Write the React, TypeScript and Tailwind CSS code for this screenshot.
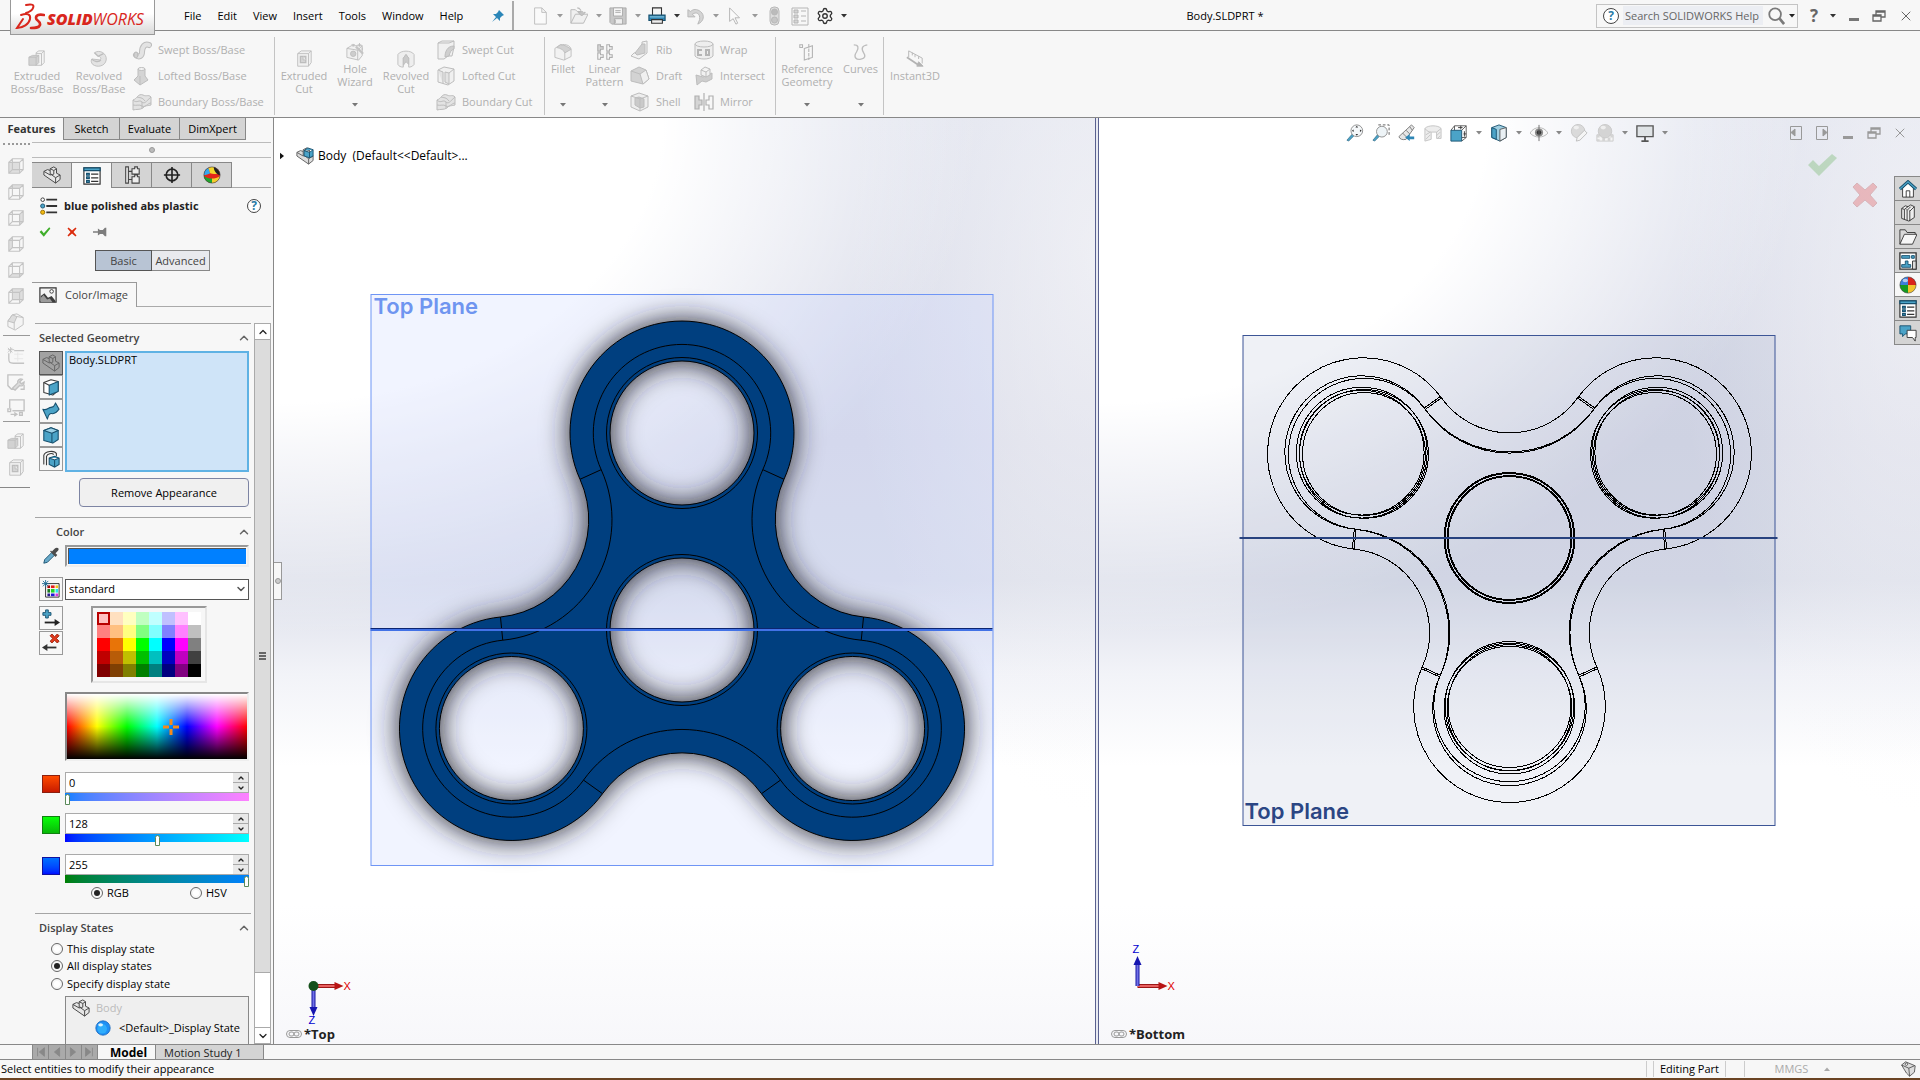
import { useState } from 'react';
import type { ReactNode } from 'react';
import { ChevronDown, ChevronUp, Settings, X } from 'lucide-react';

const G = '#bdbdbd'; // disabled stroke
const F = '#e3e3e3'; // disabled fill
const D = '#3c3c3c';
const B = '#4ba3c7';
const N = '#17506e';

// the part symbol is reused in several places
const part = (stroke: string, fill: string) => (
    <g stroke={stroke} fill={fill} strokeWidth="1.1" strokeLinejoin="round">
        <path d="M1 6l4-2 3 1V3l4-2 3 2v5l4 2v5l-5 4L1 10z" />
        <path d="M1 6l7 4 2-1M8 5v4l2 1M8 3l4 2 3-2M12 5v4l-2 1 4 3 5-3M14 13v6" fill="none" />
    </g>
);

const cube = (stroke: string, face: string | null) => (
    <g stroke={stroke} fill="none" strokeWidth="1.2">
        {face && <path d={face} fill="#dedede" stroke="none" />}
        <path d="M2 6h12v12H2zM6 2h12v12H6zM2 6l4-4M14 6l4-4M14 18l4-4M2 18l4-4" />
    </g>
);

const icons: Record<string, ReactNode> = {
    extrudedBoss: (
        <g stroke={G} fill={F}>
            <path d="M9 3l3-2h6v13l-3 3H9z" fill="#f4f4f4" />
            <path d="M18 1l-3 3v13M15 4H9" fill="none" />
            <path d="M1 8l4-2h7v8l-3 3H1zM1 8h8v9M9 8l3-2" fill="#d2d2d2" />
        </g>
    ),
    revolvedBoss: (
        <g fill="none" stroke={G}>
            <path d="M5 3c6-4 14 1 13 8-1 7-10 9-15 5-2-2-2-5-1-6l9 1c2-1 1-4-2-4z" fill={F} />
            <path d="M5 3l4 4 6-3M2 10c2 3 8 4 10 1" strokeWidth="1.500" />
        </g>
    ),
    sweptBoss: (
        <g fill="none" strokeLinecap="round">
            <path d="M4 15c3 3 6 1 6-3 0-5 3-9 7-7" stroke={G} strokeWidth="6" />
            <path d="M4 15c3 3 6 1 6-3 0-5 3-9 7-7" stroke={F} strokeWidth="4" />
            <ellipse cx="4" cy="15" rx="2" ry="3" fill="#cfcfcf" stroke={G} />
        </g>
    ),
    loftedBoss: (
        <g stroke={G} fill="#d4d4d4">
            <path d="M6 3v7L2 14l6 5 8-5-3-4V3z" />
            <ellipse cx="9.500" cy="3" rx="3.500" ry="1.500" fill="#f3f3f3" />
            <path d="M8 10v9" />
        </g>
    ),
    boundaryBoss: (
        <g stroke={G} fill={F}>
            <path d="M1 8c4-1 5-7 10-5 4 2 5-1 8 2v8c-3 1-6 0-8 3-3 2-7 1-10 2z" />
            <path d="M1 8c4 4 6-1 9 2s6-3 9-5M10 10v6M5 5c3 1 5 0 8 4M1 13c4 1 6-1 9 1s6-3 9-3" fill="none" />
        </g>
    ),
    extrudedCut: (
        <g stroke={G} fill="#f1f1f1">
            <path d="M3 4l4-3h11v13l-3 4H3z" />
            <path d="M3 4h12v14M15 4l3-3" fill="none" />
            <path d="M6 7h6v7H6z" fill="#d5d5d5" strokeWidth="1.500" />
            <path d="M9 7v4h3" />
        </g>
    ),
    holeWizard: (
        <g stroke={G} fill="#f1f1f1">
            <path d="M1 6l5-3h12v11l-4 5-13-3z" />
            <path d="M1 6l12 2v11M13 8l5-5" fill="none" />
            <circle cx="8" cy="12" r="3" fill="#cdcdcd" />
            <path d="M11 4l8 8" strokeWidth="2.500" stroke="#c4c4c4" />
            <path d="M8 1v3M6 2h4M15 0v4M13 2h4M18 5v3" />
        </g>
    ),
    revolvedCut: (
        <g stroke={G} fill="#eee">
            <path d="M1 5c3-5 15-5 18 0v11c-2 3-5 3-6 3V9l-3-4-3 4v10c-3 0-5-1-6-3z" />
            <path d="M7 9l3-4 3 4v7l-3-3-3 4z" fill="#cacaca" />
        </g>
    ),
    sweptCut: (
        <g stroke={G} fill="#f0f0f0">
            <path d="M2 3l4-2h12v6l-2 9h-4l-4 3H2z" />
            <path d="M18 6c-7 0-9 6-9 11l4-1c1-4 2-6 5-7z" fill="#cfcfcf" />
            <path d="M2 3h11l5-2" fill="none" />
        </g>
    ),
    loftedCut: (
        <g stroke={G} fill="#f0f0f0">
            <path d="M2 4l6-3 10 2v12l-6 4-10-3z" />
            <path d="M2 4l5 2v12M9 6v10l4 2V7zM13 7l5-4" fill={F} />
        </g>
    ),
    fillet: (
        <g stroke={G} fill="#f2f2f2">
            <path d="M1 6l6-4c7-1 11 1 12 5v8l-8 4-10-3z" />
            <path d="M7 2c6 0 9 3 12 5l-7 4C11 8 8 6 3 5z" fill="#d2d2d2" />
            <path d="M12 11v8" />
        </g>
    ),
    linear: (
        <g stroke="#aeaeae" fill="#f7f7f7" strokeWidth="1.200">
            <path d="M2 2h3v2h3v3H5v2H2z" fill="#d5d5d5" />
            <path d="M12 2h3v2h3v3h-3v2h-3zM2 11h3v2h3v3H5v2H2zM12 11h3v2h3v3h-3v2h-3z" />
        </g>
    ),
    rib: (
        <g stroke={G} fill={F}>
            <path d="M12 2l5-1v12l-8 6-8-3 3-3 8-2z" fill="#f3f3f3" />
            <path d="M12 4L5 13l2 2 8-2V4z" fill="#cfcfcf" />
        </g>
    ),
    draft: (
        <g stroke={G} fill="#d3d3d3">
            <path d="M1 5l8-4 7 3 3 9-6 5-12-3z" />
            <path d="M10 8l6-4 3 9-6 5z" fill="#f0f0f0" />
            <path d="M1 5l9 3" />
        </g>
    ),
    shell: (
        <g stroke={G} fill="#eee">
            <path d="M1 4l8-3 9 3v11l-8 4-9-4z" />
            <path d="M5 6l4-1 5 2v8l-4 1-5-3z" fill="#cacaca" />
            <path d="M1 4l9 3 8-3M10 7v12" fill="none" />
        </g>
    ),
    wrap: (
        <g stroke={G} fill="#eee">
            <path d="M1 4v12c3 4 15 4 18 0V4" />
            <ellipse cx="10" cy="4" rx="9" ry="3" />
            <path d="M8 10H4v5h4M12 10h3v5h-3z" stroke="#b5b5b5" strokeWidth="2" fill="none" />
        </g>
    ),
    intersect: (
        <g stroke={G} fill="#ddd">
            <path d="M2 9l7 2 9-4v6l-6 3-4-1-5 4z" fill="#cecece" />
            <path d="M7 4l4-3 5 2v6l-4 2-5-2zM7 4l5 2 4-3M12 6v5" fill="#f1f1f1" />
        </g>
    ),
    mirror: (
        <g stroke="#b0b0b0" fill="#d5d5d5" strokeWidth="1.200">
            <path d="M1 4h4v4h3v5H5v4H1z" />
            <path d="M10 1v18" />
            <path d="M19 4h-4v4h-3v5h3v4h4z" fill="#f7f7f7" />
        </g>
    ),
    refGeometry: (
        <g stroke="#b3b3b3" fill="none" strokeWidth="1.200">
            <path d="M2 2h3v3H2zM7 6l9-3v13l-9 3z" />
            <path d="M12 1v18" strokeDasharray="4 1" />
        </g>
    ),
    curves: <path d="M2 2c5 0 6 3 3 8-4 6 0 9 5 8s5-4 3-7c-3-5-2-8 4-9" stroke={G} fill="none" strokeWidth="1.500" />,
    instant3d: (
        <g stroke="#b3b3b3" fill="none">
            <path d="M3 8V1l15 8v6M7 3v3M10 5v3M14 7v3" />
            <path d="M1 8l12 8" strokeWidth="2" />
            <path d="M12 18l2-5 5 5z" fill="#b3b3b3" />
        </g>
    ),

    newDoc: <path d="M4 1h8l5 5v13H4zM12 1v5h5" fill="#fafafa" stroke="#bbb" />,
    open: (
        <g stroke="#b5b5b5" fill="#f0f0f0">
            <path d="M1 18V3h5l2 2h6v4" />
            <path d="M1 18L6 8h14l-5 10z" />
            <path d="M8 1c4 0 4 2 4 5H9l4 4 4-4h-2" fill="#c4c4c4" />
        </g>
    ),
    save: (
        <g stroke="#a9a9a9" fill="#c8c8c8">
            <path d="M1 1h18v18H3l-2-2z" />
            <path d="M5 1h10v9H5z" fill="#f6f6f6" />
            <path d="M6 13h9v6H6z" fill="#eee" />
            <path d="M7 4h6M7 6h6M7 14v4" />
        </g>
    ),
    print: (
        <g stroke="#333" strokeWidth="1.200">
            <path d="M5 9V1h10v8" fill="#f4f4f4" />
            <path d="M1 9h18v6H1z" fill="#2d83b0" stroke={N} />
            <path d="M4 14h12v4H4z" fill="#eee" />
            <path d="M2 11h16" stroke="#8cc8e2" />
        </g>
    ),
    undo: <path d="M1 3v8h8L6 8c4-3 9-1 8 6l-2 5c7-3 8-10 3-14C11 2 7 2 4 5z" fill="#d4d4d4" stroke="#b5b5b5" />,
    cursor: <path d="M4 1v15l4-3 3 6 2-1-3-6h5z" fill="#fafafa" stroke="#b0b0b0" />,
    traffic: (
        <g stroke="#b8b8b8" fill="#ddd">
            <rect x="6" y="1" width="9" height="18" rx="4" />
            <circle cx="10.500" cy="6" r="3" fill="#bbb" />
            <circle cx="10.500" cy="14" r="3" fill="#c6c6c6" />
        </g>
    ),
    props: (
        <g stroke="#b5b5b5" fill="#f7f7f7">
            <path d="M2 2h16v17H2z" />
            <path d="M4 4h4v3H4zM4 9h4v3H4zM4 14h4v3H4zM11 5h5M11 10h5M11 15h5" fill="#d5d5d5" />
        </g>
    ),

    viewIso: (
        <g stroke={G} fill="#f4f4f4">
            <path d="M1 9l5-7 5-1 7 4v8l-9 6-8-4z" />
            <path d="M1 9l5-7 5 2-3 7z" fill="#ddd" />
            <path d="M8 11v7M11 4l7 1" />
        </g>
    ),
    sketchStar: (
        <g stroke="#c4c4c4" fill="none">
            <path d="M8 8h10M8 13h10M12 6v10" stroke="#e6e6e6" />
            <path d="M2 7v6c0 4 1 5 5 5h12M8 4h11" strokeWidth="1.500" />
            <path d="M4 0v7M1 3h7M1 1l5 5M6 1L1 6" />
        </g>
    ),
    wrench: (
        <g stroke="#c2c2c2" fill="none" strokeWidth="1.500">
            <path d="M18 2H1v12l4 4h3M19 13v5h-4" />
            <path d="M6 17l6-6c-1-3 2-5 5-4l-3 3 2 2 3-2c0 3-2 5-5 4l-5 5z" fill="#ddd" />
        </g>
    ),
    frame: (
        <g stroke="#c2c2c2" fill="none" strokeWidth="1.500">
            <path d="M3 10V1h16v12H6" />
            <path d="M1 11h3v3H1zM14 15h3v3h-3zM4 17h6M8 15l3 2-3 2" />
        </g>
    ),

    partDark: part('#4a4a4a', '#e6e6e6'),
    partGray: part('#666', '#a2a2a2'),
    partBlue: (
        <g>
            {part('#666', '#dcdcdc')}
            <path d="M9 4l4-3 6 2v7l-4 2-6-2zM9 4l6 2 4-3M15 6v6" fill={B} stroke={N} />
        </g>
    ),
    propertyMgr: (
        <g stroke="#333" fill="#fff" strokeWidth="1.300">
            <path d="M1 1h18v18H1z" />
            <path d="M1 1h18v3H1z" fill={B} stroke={N} />
            <path d="M4 7h3v2H4zM4 11h3v2H4zM4 15h3v2H4z" fill={B} stroke={N} />
            <path d="M9 8h8M9 12h8M9 16h8" />
        </g>
    ),
    configMgr: (
        <g stroke="#444" fill="#eee" strokeWidth="1.200">
            <path d="M3 1h3v18H3zM6 6h4M6 15h4" />
            <path d="M10 3h3V1h3v2h2v6h-8zM10 12h3v-2h3v2h2v7h-8z" />
        </g>
    ),
    target: (
        <g stroke="#222" fill="none" strokeWidth="1.800">
            <circle cx="10" cy="10" r="6.500" />
            <path d="M10 1v18M1 10h18" />
        </g>
    ),
    ball: (
        <g>
            <path d="M10 10V1a9 9 0 0 0-9 9z" fill="#3d7edb" />
            <path d="M10 10h9a9 9 0 0 0-9-9z" fill="#d9221c" />
            <path d="M10 10H1a9 9 0 0 0 9 9z" fill="#159a22" />
            <path d="M10 10v9a9 9 0 0 0 9-9z" fill="#f2c32f" />
            <circle cx="10" cy="10" r="9" fill="none" stroke="#333" strokeOpacity=".6" />
            <ellipse cx="7" cy="5" rx="3" ry="2" fill="#fff" opacity=".6" />
        </g>
    ),
    ballMgr: (
        <g>
            <circle cx="10" cy="10" r="9" fill="#e32619" />
            <path d="M1 10c0-4 2-7 5-8l2 6c-2 1-5 2-7 2z" fill="#37a8ee" />
            <path d="M6 2c2-1 4-1 6-1l5 8c-3 0-6 0-9-1z" fill="#f3d52c" />
            <path d="M12 1c4 1 7 5 7 9-3 0-7-4-7-9z" fill="#222" />
            <path d="M1 11c3 2 6 3 9 3v5c-5 0-9-4-9-8z" fill="#1fa52c" />
            <path d="M10 14c3 0 6-1 9-3-1 5-5 8-9 8z" fill="#f4cd2b" />
            <circle cx="10" cy="10" r="9" fill="none" stroke="#444" strokeOpacity=".7" />
        </g>
    ),
    legend: (
        <g stroke="#333">
            <path d="M7 3h12M7 10h12M7 17h12" strokeWidth="2" />
            <circle cx="3" cy="3" r="2" fill="#fff" />
            <circle cx="3" cy="10" r="2.300" fill={B} stroke={N} />
            <circle cx="3" cy="17" r="2.300" fill="#f2b90f" stroke="#946c00" />
        </g>
    ),
    check: <path d="M1 10l3-3 4 5 9-10 2 2L8 18z" fill="#3fae2a" />,
    cross: <path d="M3 1l7 6 7-6 2 2-6 7 6 7-2 2-7-6-7 6-2-2 6-7-6-7z" fill="#db2b0c" />,
    pushpin: <path d="M0 9h7V5l3 2h4l3-3h2v12h-2l-3-3h-4l-3 2v-4H0z" fill="#7d7d7d" />,
    picture: (
        <g>
            <path d="M1 2h18v16H1z" fill="#f4f4f4" stroke="#333" strokeWidth="1.300" />
            <path d="M2 11l4-3 4 5 4-2 4 5v2H2z" fill="#3d3d3d" />
            <path d="M2 13l3-3 4 5 3-1 3 4H2z" fill="#9b9b9b" />
            <circle cx="14" cy="6" r="2" fill="#fff" stroke="#333" />
        </g>
    ),
    faceBox: (
        <g strokeWidth="1.200" strokeLinejoin="round">
            <path d="M2 5l8-3 8 2v10l-6 5-10-3z" fill="#fff" stroke={D} />
            <path d="M8 8l10-4v11l-10 4z" fill={B} stroke={N} />
            <path d="M2 5l6 3" stroke={D} />
        </g>
    ),
    surface: <path d="M1 8c4 2 6-2 9-2 4 0 4-3 5-5l4 7c-2 2-3 5-7 5-4-1-5 2-6 6z" fill={B} stroke={N} strokeWidth="1.200" strokeLinejoin="round" />,
    solid: (
        <g strokeWidth="1.200" stroke={N} fill={B} strokeLinejoin="round">
            <path d="M2 5l8-3 8 3v10l-6 4-10-3z" />
            <path d="M2 5l9 3 7-3-8-3z" fill="#9bd0e6" />
            <path d="M11 8v11" />
        </g>
    ),
    feature: (
        <g strokeWidth="1.200">
            <path d="M2 16V6c1-5 12-6 14-2v3M5 17V7c1-3 6-4 8-2" fill="none" stroke={D} />
            <path d="M8 9l6-2 5 2v7l-5 3-6-3zM8 9l6 2 5-2M14 11v8" fill={B} stroke={N} />
        </g>
    ),
    dropper: (
        <g>
            <path d="M2 18l1-4 8-8 3 3-8 8z" fill="#68a9c9" stroke={N} />
            <path d="M9 5l6 6 2-2-2-2 3-3c2-3-2-4-4-2l-3 3-1-1z" fill="#4c4c4c" />
        </g>
    ),
    swatches: (
        <g>
            <path d="M4 4h15v15H4z" fill="#fff" stroke="#222" />
            <path d="M6 6h3v3H6z" fill="#a00" />
            <path d="M10 6h4v3h-4z" fill="#e21a1a" />
            <path d="M15 6h3v3h-3z" fill="#f2c418" />
            <path d="M6 10h3v4H6z" fill="#197b23" />
            <path d="M10 10h4v4h-4z" fill="#22d629" />
            <path d="M15 10h3v4h-3z" fill="#2be3ef" />
            <path d="M6 15h3v3H6z" fill="#281a8c" />
            <path d="M10 15h4v3h-4z" fill="#2018d8" />
            <path d="M15 15h3v3h-3z" fill="#d837e0" />
            <path d="M4 0v8M0 4h8M1 1l6 6M7 1L1 7" stroke="#1f6b94" />
        </g>
    ),
    addSwatch: (
        <g>
            <path d="M4 1h3v3h3v3H7v3H4V7H1V4h3z" fill={B} stroke={N} />
            <path d="M3 15h12" stroke="#222" strokeWidth="2" />
            <path d="M14 11l6 4-6 4z" fill="#222" />
        </g>
    ),
    delSwatch: (
        <g>
            <path d="M9 2l2-2 3 3 3-3 2 2-3 3 3 3-2 2-3-3-3 3-2-2 3-3z" fill="#e23a1c" stroke="#951a06" />
            <path d="M5 15h11" stroke="#333" strokeWidth="2" />
            <path d="M6 11l-6 4 6 4z" fill="#333" />
        </g>
    ),
    sphere: (
        <g>
            <circle cx="10" cy="10" r="9" fill="#1e8ff5" stroke="#1766bd" />
            <circle cx="9" cy="11" r="6" fill="#3ac1ff" opacity=".6" />
            <ellipse cx="7" cy="6" rx="3" ry="2" fill="#d9f3ff" />
        </g>
    ),

    zoomFit: (
        <g>
            <path d="M1 18l6-7 2 2-6 6z" fill={B} stroke={N} strokeWidth=".600" />
            <circle cx="12" cy="7.500" r="6.500" fill="#f5f8fa" stroke="#8a8a8a" />
            <path d="M12 2l1.500 2h-3zM12 13l1.500-2h-3zM6.500 7.500l2-1.500v3zM17.500 7.500l-2-1.500v3z" fill="#333" />
        </g>
    ),
    zoomArea: (
        <g>
            <path d="M7 1h12v13" stroke="#555" fill="none" strokeDasharray="3 2" />
            <path d="M1 18l5-6 2 2-5 5z" fill={B} stroke={N} strokeWidth=".600" />
            <circle cx="11" cy="8.500" r="6" fill="#eef4f7" stroke="#8a8a8a" />
        </g>
    ),
    prevView: (
        <g stroke="#777">
            <path d="M1 14L15 1l3 3L9 17c-4 1-7 0-8-3z" fill="#e6e6e6" />
            <path d="M5 10l5 5M9 7l4 4M13 3l3 4" />
            <path d="M18 14v3h-5v2l-5-4 5-4v3z" fill="#2e86b5" stroke="none" />
        </g>
    ),
    section: (
        <g stroke="#c2c2c2" fill="#ededed">
            <path d="M1 5c3-4 15-4 18 0v11h-5V9H8v8l-7 2z" />
            <path d="M1 5c2 3 5 4 7 4M14 9l5-4M2 12l5-3M2 17l5-5M14 13l4-4M15 16l3-3" fill="none" />
        </g>
    ),
    orient: (
        <g>
            <path d="M5 7V2h13v13h-5M5 2L1 7M18 2l-5 5M18 15l-5 4" fill="none" stroke="#555" />
            <path d="M1 7h12v12H1z" fill={B} stroke={N} />
            <path d="M9 4h5M12 2v4M15 11h3M16 8v6" stroke="#333" />
        </g>
    ),
    display: (
        <g strokeLinejoin="round">
            <path d="M2 4l8-3 8 3v11l-7 4-9-4z" fill="#9fcfe2" stroke={N} />
            <path d="M11 6v13l7-4V4z" fill="#e9f0f4" stroke="#555" />
            <path d="M2 4l5 2v11l-5-2z" fill={B} stroke={N} />
        </g>
    ),
    eye: (
        <g>
            <path d="M0 10c5-8 15-8 20 0-5 6-15 6-20 0z" fill="#f8f8f8" stroke="#b5b5b5" />
            <circle cx="10" cy="9.500" r="4.500" fill="#8a8a8a" />
            <circle cx="10" cy="9.500" r="2.500" fill="#333" />
            <path d="M10 1v18" stroke="#666" />
        </g>
    ),
    editAppearance: (
        <g fill="#dadada" stroke="#c6c6c6">
            <circle cx="9" cy="8" r="7.500" />
            <ellipse cx="7" cy="4" rx="3" ry="2" fill="#f0f0f0" stroke="none" />
            <path d="M8 15l8-8 3 3-8 8-4 1z" fill="#f5f5f5" stroke="#bbb" />
        </g>
    ),
    scene: (
        <g fill="#d4d4d4" stroke="#c8c8c8">
            <path d="M1 12h18v7H1z" fill="#f4f4f4" />
            <path d="M1 12h3v3H1zM7 15h3v4H7zM13 15h3v4h-3zM16 12h3v3h-3zM1 17h3v2H1z" stroke="none" />
            <circle cx="10" cy="8" r="7.500" />
            <ellipse cx="8" cy="4" rx="3" ry="2" fill="#efefef" stroke="none" />
        </g>
    ),
    monitor: (
        <g stroke="#555">
            <path d="M1 2h18v12H1z" fill="#dfe3e6" strokeWidth="1.500" />
            <path d="M10 14v4M6 19h8" strokeWidth="2" />
        </g>
    ),

    home: (
        <g>
            <path d="M4 9v10h12V9l-6-6z" fill="#fff" stroke="#333" />
            <path d="M8 19v-7h4v7" fill="none" stroke="#333" />
            <path d="M1 10l9-8 9 8" fill="none" stroke={N} strokeWidth="3.500" />
            <path d="M1 10l9-8 9 8" fill="none" stroke={B} strokeWidth="1.500" />
        </g>
    ),
    library: (
        <g stroke="#333" fill="#eee">
            <path d="M3 5l4-3 3 1 3-2 4 2v12l-6 4-8-3z" />
            <path d="M3 5l3 1v11M6 6l4-3M8 6l1 1v11M9 7l4-4M11 7l1 1v11M12 8l5-5" fill="none" />
        </g>
    ),
    folder: (
        <g stroke="#333" fill="#d9d9d9" strokeLinejoin="round">
            <path d="M1 18V2h6l2 3h9v3" />
            <path d="M1 18L6 7h14l-5 11z" fill="#f6f6f6" />
        </g>
    ),
    palette: (
        <g stroke={N} fill={B}>
            <path d="M1 1h18v18H1z" fill="#fff" stroke="#333" strokeWidth="1.500" />
            <path d="M3 4h9v3H3zM14 4h3v3h-3zM7 10h3v4h3v3H3v-3h4z" />
            <path d="M15 10h4v9h-4z" fill="#ddd" stroke="#333" />
        </g>
    ),
    forum: (
        <g strokeLinejoin="round">
            <path d="M1 2h12v9H7l-3 3v-3H1z" fill={B} stroke={N} />
            <path d="M9 7h10v8h-1v4l-3-4H9z" fill="#fff" stroke="#333" />
        </g>
    ),
    tag: (
        <g stroke="#444" fill="#ddd">
            <path d="M2 5l5-4 12 5-1 8-6 5-4-4z" />
            <path d="M2 5l9 4 7-3M11 9l1 10" fill="none" />
            <circle cx="8" cy="4" r="1.500" fill="#fff" />
        </g>
    ),
};

function Icon({ name, className = 'size-5' }: { name: string; className?: string }) {
    return (
        <svg viewBox="0 0 20 20" fill="none" className={`shrink-0 ${className}`} aria-hidden="true">
            {icons[name]}
        </svg>
    );
}

function Caret({ className = 'text-[#888]' }: { className?: string }) {
    return (
        <svg viewBox="0 0 6 4" className={`h-1 w-1.5 shrink-0 ${className}`} aria-hidden="true">
            <path d="M0 0h6L3 3.500z" fill="currentColor" />
        </svg>
    );
}

function HelpIcon({ className = 'size-4' }: { className?: string }) {
    return (
        <span className={`flex shrink-0 items-center justify-center rounded-full border border-[#444] bg-white text-xs leading-none font-bold text-[#2b7ba6] ${className}`}>?</span>
    );
}

function Restore() {
    return (
        <svg viewBox="0 0 14 14" className="size-3.5" fill="none" stroke="currentColor" strokeWidth="1.300">
            <path d="M1 6h8v6H1zM4 6V2h9v6H9M1 7h8M4 3h9" />
        </svg>
    );
}

/* ---------- title bar ---------- */

const menus = ['File', 'Edit', 'View', 'Insert', 'Tools', 'Window', 'Help'];
const quick = [
    { icon: 'newDoc', label: 'New' },
    { icon: 'open', label: 'Open' },
    { icon: 'save', label: 'Save' },
    { icon: 'print', label: 'Print', on: true },
    { icon: 'undo', label: 'Undo' },
    { icon: 'cursor', label: 'Select' },
];

function TitleBar() {
    return (
        <header className="relative z-10 flex h-[31px] shrink-0 items-center border-b border-[#888] pt-px">
            <div className="absolute top-0 left-[10px] flex h-[35px] w-[145px] items-center border border-t-0 border-[#999] bg-linear-to-b from-white from-40% to-[#d9d9d9] pl-1">
                <svg viewBox="0 0 30 28" className="h-7 w-[30px] shrink-0" fill="none" stroke="#d9261c" strokeLinecap="round" aria-hidden="true">
                    <path d="M11 2c4-1 9-1 7 3-1 3-4 4-7 5" strokeWidth="2" />
                    <path d="M6 12c6-2 10-1 9 4s-7 9-13 9l6-9" strokeWidth="2" />
                    <path d="M29 12c-5-1-8 0-8 3s5 3 4 7c-1 3-5 3-9 3" strokeWidth="2.600" />
                </svg>
                <span className="pt-1 pl-0.5 font-['Open_Sans',sans-serif] text-base leading-none text-[#d9261c] italic">
                    <b className="font-extrabold">SOLID</b>WORKS
                </span>
            </div>
            <div className="flex h-full w-[514px] items-center border-r-2 border-[#aaa] pl-[184px]">
                <nav className="flex gap-4">
                    {menus.map((m) => (
                        <button key={m} type="button" className="text-black">{m}</button>
                    ))}
                </nav>
                <svg viewBox="0 0 12 12" className="mr-2 ml-auto size-3" aria-label="Pin menu">
                    <path d="M7 0l5 5-2 1-2 2v3L5 8l-5 4 4-5-3-3h3l2-2z" fill="#2b86b8" />
                </svg>
            </div>
            <div className="ml-4 flex items-center">
                {quick.map((q) => (
                    <div key={q.icon} className="flex items-center">
                        <button type="button" aria-label={q.label} className="flex w-5 justify-center"><Icon name={q.icon} className="size-[18px]" /></button>
                        <span className="flex w-[19px] justify-center"><Caret className={q.on ? 'text-[#333]' : 'text-[#999]'} /></span>
                    </div>
                ))}
                <button type="button" aria-label="Rebuild" className="mr-1.5"><Icon name="traffic" className="size-5" /></button>
                <button type="button" aria-label="File properties" className="mr-1.5"><Icon name="props" className="size-5" /></button>
                <button type="button" aria-label="Options"><Settings className="size-[18px] text-[#333]" strokeWidth={1.8} /></button>
                <span className="flex w-5 justify-center"><Caret className="text-[#333]" /></span>
            </div>
            <h1 className="flex-1 text-center text-black">Body.SLDPRT *</h1>
            <div className="flex h-6 w-[202px] items-center border border-[#c4c4c4] pl-1.5">
                <HelpIcon />
                <input type="text" aria-label="Search help" placeholder="Search SOLIDWORKS Help" className="ml-1 h-[19px] w-[140px] bg-[#eceef3] px-0.5 outline-none placeholder:text-[#666]" />
                <button type="button" aria-label="Search" className="ml-1">
                    <svg viewBox="0 0 20 20" className="size-[18px]" fill="none" stroke="#7a7a7a" strokeWidth="2">
                        <circle cx="9" cy="8" r="6.500" />
                        <path d="M14 13l5 6" strokeWidth="3" />
                    </svg>
                </button>
                <Caret className="ml-1" />
            </div>
            <div className="flex items-center text-[#666]">
                <button type="button" className="w-8 text-[17px] leading-none font-bold">?</button>
                <Caret className="text-[#333]" />
                <button type="button" aria-label="Minimize" className="ml-1.5 flex w-6 justify-center"><span className="mt-2 h-[3px] w-2.5 bg-[#777]" /></button>
                <button type="button" aria-label="Restore" className="flex w-[26px] justify-center"><Restore /></button>
                <button type="button" aria-label="Close" className="flex w-7 justify-center"><X className="size-4" strokeWidth={1.5} /></button>
            </div>
        </header>
    );
}

/* ---------- ribbon ---------- */

function BigTool({ icon, lines, width, arrow }: { icon: string; lines: string[]; width: string; arrow?: boolean }) {
    return (
        <button type="button" disabled className={`flex flex-col items-center ${width} ${arrow ? 'pt-3' : 'pt-[19px]'}`}>
            <Icon name={icon} className="size-[18px]" />
            <span className="mt-px leading-[13px] whitespace-pre">{lines.join('\n')}</span>
            {arrow && <Caret className="mt-auto mb-2.5 text-[#777]" />}
        </button>
    );
}

function ToolColumn({ items, width }: { items: string[][]; width: string }) {
    return (
        <div className={`flex flex-col gap-1.5 pt-[9px] ${width}`}>
            {items.map(([icon, label]) => (
                <button key={label} type="button" disabled className="flex h-5 items-center gap-1.5 whitespace-nowrap">
                    <Icon name={icon} className="size-5" />
                    {label}
                </button>
            ))}
        </div>
    );
}

function Sep() {
    return <div className="my-1.5 mb-0.5 w-px shrink-0 bg-[#c4c4c4]" />;
}

function Ribbon() {
    return (
        <div className="flex h-[87px] shrink-0 items-stretch border-b border-[#888] pl-1.5 text-[#b0b0b0]">
            <BigTool icon="extrudedBoss" lines={['Extruded', 'Boss/Base']} width="w-[62px]" />
            <BigTool icon="revolvedBoss" lines={['Revolved', 'Boss/Base']} width="w-[62px]" />
            <ToolColumn width="w-[144px] pl-0.5" items={[['sweptBoss', 'Swept Boss/Base'], ['loftedBoss', 'Lofted Boss/Base'], ['boundaryBoss', 'Boundary Boss/Base']]} />
            <Sep />
            <BigTool icon="extrudedCut" lines={['Extruded', 'Cut']} width="w-[58px]" />
            <BigTool icon="holeWizard" lines={['Hole', 'Wizard']} width="w-11" arrow />
            <BigTool icon="revolvedCut" lines={['Revolved', 'Cut']} width="w-[58px]" />
            <ToolColumn width="w-[109px] pl-px" items={[['sweptCut', 'Swept Cut'], ['loftedCut', 'Lofted Cut'], ['boundaryBoss', 'Boundary Cut']]} />
            <Sep />
            <BigTool icon="fillet" lines={['Fillet']} width="w-9" arrow />
            <BigTool icon="linear" lines={['Linear', 'Pattern']} width="w-[47px]" arrow />
            <ToolColumn width="w-16 pl-0.5" items={[['rib', 'Rib'], ['draft', 'Draft'], ['shell', 'Shell']]} />
            <ToolColumn width="w-[83px] pl-0.5" items={[['wrap', 'Wrap'], ['intersect', 'Intersect'], ['mirror', 'Mirror']]} />
            <Sep />
            <BigTool icon="refGeometry" lines={['Reference', 'Geometry']} width="w-[62px]" arrow />
            <BigTool icon="curves" lines={['Curves']} width="w-[45px]" arrow />
            <Sep />
            <BigTool icon="instant3d" lines={['Instant3D']} width="w-[62px]" />
        </div>
    );
}

/* ---------- left side ---------- */

const viewFaces = [
    'M2 6h12v12H2z',
    'M2 6l4-4h12l-4 4z',
    'M14 6l4-4v12l-4 4z',
    'M2 6l4-4v12l-4 4z',
    'M2 18l4-4h12l-4 4z',
    'M6 2h12v12H6z',
];

function SideTools() {
    return (
        <aside className="flex w-8 shrink-0 flex-col">
            <div className="mt-[3px] ml-[3px] w-[27px] border-t-2 border-dotted border-[#999]" />
            <div className="mt-3 flex flex-col items-center gap-2">
                {viewFaces.map((face) => (
                    <svg key={face} viewBox="0 0 20 20" className="size-[18px]" aria-hidden="true">{cube('#c4c4c4', face)}</svg>
                ))}
                <Icon name="viewIso" className="size-[18px]" />
            </div>
            <div className="mt-1 mr-0.5 ml-[3px] h-px bg-[#999]" />
            <div className="mt-[11px] flex flex-col items-center gap-2">
                <Icon name="sketchStar" className="size-[18px]" />
                <Icon name="wrench" className="size-[18px]" />
                <Icon name="frame" className="size-[18px]" />
            </div>
            <div className="mt-1 mr-0.5 ml-[3px] h-px bg-[#999]" />
            <div className="mt-[11px] flex flex-col items-center gap-2">
                <Icon name="extrudedBoss" className="size-[18px]" />
                <Icon name="extrudedCut" className="size-[18px]" />
            </div>
            <div className="mt-2.5 mr-0.5 h-px bg-[#888]" />
        </aside>
    );
}

function Section({ title, indent, children }: { title: string; indent: string; children: ReactNode }) {
    return (
        <section className="border-t border-[#a5a5a5]">
            <button type="button" className={`flex h-[27px] w-full items-center justify-between font-semibold text-[#444] ${indent}`}>
                {title}
                <ChevronUp className="size-3.5 text-[#666]" strokeWidth={2.5} />
            </button>
            {children}
        </section>
    );
}

const palette = [
    'bg-[#ffc0c0]', 'bg-[#ffe0c0]', 'bg-[#ffffc0]', 'bg-[#c0ffc0]', 'bg-[#c0ffff]', 'bg-[#c0c0ff]', 'bg-[#ffc0ff]', 'bg-[#ffffff]',
    'bg-[#ff8080]', 'bg-[#ffc080]', 'bg-[#ffff80]', 'bg-[#80ff80]', 'bg-[#80ffff]', 'bg-[#8080ff]', 'bg-[#ff80ff]', 'bg-[#c0c0c0]',
    'bg-[#ff0000]', 'bg-[#e87408]', 'bg-[#ffff00]', 'bg-[#00ff00]', 'bg-[#00ffff]', 'bg-[#0000ff]', 'bg-[#ff00ff]', 'bg-[#808080]',
    'bg-[#c00000]', 'bg-[#b85c08]', 'bg-[#c0c000]', 'bg-[#00c000]', 'bg-[#00c0c0]', 'bg-[#0000c0]', 'bg-[#c000c0]', 'bg-[#404040]',
    'bg-[#800000]', 'bg-[#804004]', 'bg-[#808000]', 'bg-[#008000]', 'bg-[#008080]', 'bg-[#000080]', 'bg-[#800080]', 'bg-[#000000]',
];

const channels = [
    { label: 'Red', value: 0, swatch: 'border-[#8c2010] from-[#ff4a00] to-[#c81800]', track: 'from-[#0080ff] to-[#ff80ff]' },
    { label: 'Green', value: 128, swatch: 'border-[#108010] from-[#08ff08] to-[#08b808]', track: 'from-[#0000ff] to-[#00ffff]' },
    { label: 'Blue', value: 255, swatch: 'border-[#1010a0] from-[#0070ff] to-[#0008ff]', track: 'from-[#008000] to-[#0080ff]' },
];

function Channel({ label, value, swatch, track }: { label: string; value: number; swatch: string; track: string }) {
    const [v, setV] = useState(value);
    return (
        <div className="flex h-[41px] items-start pl-[7px]">
            <span className={`mt-[3px] mr-[5px] size-[18px] shrink-0 border bg-linear-to-b ${swatch}`} />
            <div className="flex-1">
                <div className="flex h-[21px] border border-[#aaa] bg-white">
                    <input type="text" aria-label={label} value={v} onChange={(e) => setV(Number(e.target.value) || 0)} className="w-full min-w-0 pl-[3px] text-black outline-none" />
                    <div className="flex w-[15px] shrink-0 flex-col gap-px bg-[#aaa]">
                        <button type="button" aria-label={`Increase ${label}`} onClick={() => setV(Math.min(255, v + 1))} className="flex flex-1 items-center justify-center bg-[#e9e9e9]">
                            <ChevronUp className="size-2" strokeWidth={4} />
                        </button>
                        <button type="button" aria-label={`Decrease ${label}`} onClick={() => setV(Math.max(0, v - 1))} className="flex flex-1 items-center justify-center bg-[#e9e9e9]">
                            <ChevronDown className="size-2" strokeWidth={4} />
                        </button>
                    </div>
                </div>
                <input
                    type="range"
                    aria-label={`${label} level`}
                    min={0}
                    max={255}
                    value={v}
                    onChange={(e) => setV(Number(e.target.value))}
                    className={`block h-2 w-full appearance-none bg-linear-to-r ${track} [&::-webkit-slider-thumb]:mt-1 [&::-webkit-slider-thumb]:h-[11px] [&::-webkit-slider-thumb]:w-[5px] [&::-webkit-slider-thumb]:appearance-none [&::-webkit-slider-thumb]:rounded-t-sm [&::-webkit-slider-thumb]:border [&::-webkit-slider-thumb]:border-[#5a8a5a] [&::-webkit-slider-thumb]:bg-white`}
                />
            </div>
        </div>
    );
}

function Radio({ name, label, checked, className = '' }: { name: string; label: string; checked?: boolean; className?: string }) {
    return (
        <label className={`flex items-center gap-1 text-black ${className}`}>
            <input type="radio" name={name} defaultChecked={checked} className="size-3 shrink-0 appearance-none rounded-full border border-[#666] bg-white bg-clip-content p-0.5 checked:bg-[#222]" />
            {label}
        </label>
    );
}

function IconButton({ icon, label, pressed }: { icon: string; label: string; pressed?: boolean }) {
    return (
        <button type="button" aria-label={label} className={`flex size-6 shrink-0 items-center justify-center border ${pressed ? 'border-[#555] bg-[#a2a2a2]' : 'border-[#999] bg-[#f7f7f7]'}`}>
            <Icon name={icon} className="size-[18px]" />
        </button>
    );
}

function ColorControls() {
    return (
        <div className="pr-0.5 pb-2.5">
            <div className="flex items-center pl-[7px]">
                <Icon name="dropper" className="mr-[5px] size-[18px]" />
                <div className="h-[22px] flex-1 border-2 border-[#999] border-r-[#eee] border-b-[#eee] p-px">
                    <div className="h-full border-t border-l border-[#555] bg-[#0080ff]" />
                </div>
            </div>
            <div className="mt-2.5 flex items-center gap-0.5 pl-1">
                <IconButton icon="swatches" label="Edit swatches" />
                <div className="relative flex-1">
                    <select aria-label="Swatch set" className="block h-[21px] w-full appearance-none border border-[#555] bg-white pl-[3px] text-black">
                        <option>standard</option>
                    </select>
                    <ChevronDown className="pointer-events-none absolute top-1 right-0.5 size-3 text-[#555]" strokeWidth={3} />
                </div>
            </div>
            <div className="mt-[5px] flex items-start pl-1">
                <div className="flex flex-col gap-px">
                    <IconButton icon="addSwatch" label="Add swatch" />
                    <IconButton icon="delSwatch" label="Delete swatch" />
                </div>
                <div className="ml-7 border-2 border-[#999] border-r-[#e6e6e6] border-b-[#e6e6e6] p-1">
                    <div className="grid grid-cols-8">
                        {palette.map((c, i) => (
                            <button key={c} type="button" aria-label={`Swatch ${i + 1}`} className={`size-[13px] ${c} ${i === 0 ? 'border-2 border-[#b80000]' : ''}`} />
                        ))}
                    </div>
                </div>
            </div>
            <div className="relative mt-[9px] ml-[30px] h-[69px] border-2 border-[#888] border-r-[#eee] border-b-[#eee] bg-[linear-gradient(to_bottom,#fff,transparent_50%,#000),linear-gradient(to_right,#f00,#ff0,#0f0,#0ff,#00f,#f0f,#f00)]">
                <svg viewBox="0 0 16 16" className="absolute top-1/2 left-[58%] size-4 -translate-x-1/2 -translate-y-1/2" aria-hidden="true">
                    <path d="M8 0v6M8 10v6M0 8h6M10 8h6" stroke="#f58a1c" strokeWidth="3" />
                </svg>
            </div>
            <div className="mt-[11px]">
                {channels.map((c) => <Channel key={c.label} {...c} />)}
            </div>
            <div className="-mt-3 flex h-5 items-center pl-14">
                <Radio name="model" label="RGB" checked className="w-[99px]" />
                <Radio name="model" label="HSV" />
            </div>
        </div>
    );
}

function PropertyPanel() {
    return (
        <div className="flex min-h-0 flex-1 gap-[3px] pl-[3px]">
            <div className="mt-4 flex min-h-0 flex-1 flex-col overflow-hidden">
                <Section title="Selected Geometry" indent="pl-1">
                    <div className="flex gap-0.5 pr-0.5 pl-1">
                        <div className="flex h-[121px] flex-col">
                            <IconButton icon="partGray" label="Select part" pressed />
                            <IconButton icon="faceBox" label="Select faces" />
                            <IconButton icon="surface" label="Select surfaces" />
                            <IconButton icon="solid" label="Select bodies" />
                            <IconButton icon="feature" label="Select features" />
                        </div>
                        <div className="flex-1 border-2 border-[#5fb2e4] bg-[#cfe4f8] pl-0.5 leading-[14px] text-black">Body.SLDPRT</div>
                    </div>
                    <div className="flex justify-end pt-1.5 pr-0.5 pb-2.5">
                        <button type="button" className="h-[29px] w-[170px] rounded border border-[#7d84a3] bg-[#f0f0f0] text-black">Remove Appearance</button>
                    </div>
                </Section>
                <Section title="Color" indent="pl-[21px]">
                    <ColorControls />
                </Section>
                <Section title="Display States" indent="pl-1">
                    <div className="flex flex-col gap-px pl-4">
                        <Radio name="state" label="This display state" className="h-4" />
                        <Radio name="state" label="All display states" checked className="h-4" />
                        <Radio name="state" label="Specify display state" className="mt-px h-4" />
                    </div>
                    <div className="mt-1 mr-0.5 ml-[30px] h-12 border border-b-0 border-[#888] bg-[#efefef] pl-1.5">
                        <div className="flex h-[22px] items-center gap-1.5 text-[#bbb]">
                            <Icon name="partDark" className="size-[18px]" />
                            Body
                        </div>
                        <div className="flex h-[18px] items-center gap-2 pl-[23px] whitespace-nowrap text-black">
                            <Icon name="sphere" className="size-4" />
                            &lt;Default&gt;_Display State
                        </div>
                    </div>
                </Section>
            </div>
            <div className="mt-4 mr-0.5 flex w-[17px] shrink-0 flex-col border border-[#aaa] bg-white">
                <button type="button" aria-label="Scroll up" className="flex h-4 items-center justify-center border-b border-[#aaa]"><ChevronUp className="size-3" strokeWidth={2.5} /></button>
                <div className="flex flex-1 flex-col items-center justify-center gap-px border-b border-[#aaa] bg-[#dcdcdc]">
                    <span className="h-0.5 w-[7px] bg-[#666]" />
                    <span className="h-0.5 w-[7px] bg-[#666]" />
                    <span className="h-0.5 w-[7px] bg-[#666]" />
                </div>
                <div className="h-[54px]" />
                <button type="button" aria-label="Scroll down" className="flex h-4 items-center justify-center border-t border-[#aaa]"><ChevronDown className="size-3" strokeWidth={2.5} /></button>
            </div>
        </div>
    );
}

const managerTabs = ['partDark', 'propertyMgr', 'configMgr', 'target', 'ballMgr'];
const commandTabs = [
    { label: 'Features', width: 'w-[63px]' },
    { label: 'Sketch', width: 'w-[56px]' },
    { label: 'Evaluate', width: 'w-[60px]' },
    { label: 'DimXpert', width: 'w-[67px]' },
];

function LeftPanel() {
    return (
        <div className="flex w-[274px] shrink-0 flex-col border-r border-[#888]">
            <div role="tablist" className="flex h-[22px] shrink-0">
                {commandTabs.map((t, i) => (
                    <button key={t.label} type="button" role="tab" aria-selected={i === 0} className={`${t.width} ${i === 0 ? 'font-bold text-[#333]' : 'border-b border-l border-[#888] bg-[#d4d4d4] text-black last:border-r'}`}>
                        {t.label}
                    </button>
                ))}
            </div>
            <div className="flex min-h-0 flex-1">
                <SideTools />
                <div className="mt-0.5 flex min-h-0 min-w-0 flex-1 flex-col">
                    <div className="mr-0.5 flex h-4 shrink-0 items-center justify-center border-y border-[#bbb]">
                        <span className="size-1.5 rounded-full border border-[#999] bg-[#bbb]" />
                    </div>
                    <div className="mt-1 mr-0.5 flex h-[26px] shrink-0">
                        {managerTabs.map((t, i) => (
                            <button key={t} type="button" aria-label={t} className={`flex w-10 items-center justify-center border-t border-r border-[#888] ${i === 1 ? '' : 'border-b bg-[#d4d4d4]'}`}>
                                <Icon name={t} className="size-[18px]" />
                            </button>
                        ))}
                        <div className="flex-1 border-b border-[#aaa]" />
                    </div>
                    <div className="mt-1.5 flex h-6 shrink-0 items-center pr-3 pl-2">
                        <Icon name="legend" className="size-[18px]" />
                        <h2 className="ml-1.5 flex-1 font-bold whitespace-nowrap text-[#222]">blue polished abs plastic</h2>
                        <HelpIcon className="size-3.5" />
                    </div>
                    <div className="mt-1 flex h-5 shrink-0 items-center gap-4 pl-[7px]">
                        <button type="button" aria-label="OK"><Icon name="check" className="size-3" /></button>
                        <button type="button" aria-label="Cancel"><Icon name="cross" className="size-2.5" /></button>
                        <button type="button" aria-label="Keep visible"><Icon name="pushpin" className="size-3.5" /></button>
                    </div>
                    <div className="mt-2 flex h-[21px] shrink-0 pl-[63px] text-[#444]">
                        <button type="button" className="w-[57px] border border-[#555] bg-[#b8c4d4]">Basic</button>
                        <button type="button" className="w-[58px] border border-l-0 border-[#888] bg-[#e9eaee]">Advanced</button>
                    </div>
                    <div className="mt-[11px] mr-0.5 flex h-[25px] shrink-0">
                        <button type="button" className="flex w-[105px] items-center gap-2 border-t border-r border-[#999] pl-[7px] text-[#444]">
                            <Icon name="picture" className="size-[18px]" />
                            Color/Image
                        </button>
                        <div className="flex-1 border-b border-[#aaa]" />
                    </div>
                    <PropertyPanel />
                </div>
            </div>
        </div>
    );
}

/* ---------- graphics area ---------- */

const pt = (cx: number, cy: number, r: number, deg: number) => {
    const a = (deg * Math.PI) / 180;
    return [cx + r * Math.cos(a), cy + r * Math.sin(a)];
};

// Outline of three lobes joined by concave arcs, s is the overall scale.
function outline(cx: number, cy: number, s: number, start: number, lobeR: number, neckR: number) {
    const touch = (lobe: number, neck: number) => {
        const [lx, ly] = pt(cx, cy, 197 * s, lobe);
        const [nx, ny] = pt(cx, cy, 220.6 * s, neck);
        const k = lobeR / (lobeR + neckR);
        return [lx + (nx - lx) * k, ly + (ny - ly) * k].map((n) => n.toFixed(1)).join(' ');
    };
    let d = `M${touch(start, start - 60)}`;
    for (let i = 0; i < 3; i++) {
        const a = start + i * 120;
        d += `A${lobeR * s} ${lobeR * s} 0 1 1 ${touch(a, a + 60)}`;
        d += `A${neckR * s} ${neckR * s} 0 0 0 ${touch(a + 120, a + 60)}`;
    }
    return `${d}Z`;
}

function seams(cx: number, cy: number, s: number, start: number) {
    let d = '';
    for (let i = 0; i < 3; i++) {
        const lobe = start + i * 120;
        const [lx, ly] = pt(cx, cy, 197 * s, lobe);
        for (const side of [-60, 60]) {
            const [nx, ny] = pt(cx, cy, 220.6 * s, lobe + side);
            const len = Math.hypot(nx - lx, ny - ly);
            const ux = (nx - lx) / len;
            const uy = (ny - ly) / len;
            d += `M${lx + ux * 88.7 * s} ${ly + uy * 88.7 * s}L${lx + ux * 112 * s} ${ly + uy * 112 * s}`;
        }
    }
    return d;
}

const holes = (cx: number, cy: number, s: number, start: number) => [
    [cx, cy],
    ...[0, 120, 240].map((a) => pt(cx, cy, 197 * s, start + a)),
];

const circlePath = (x: number, y: number, r: number) => `M${x - r} ${y}a${r} ${r} 0 1 0 ${2 * r} 0a${r} ${r} 0 1 0 ${-2 * r} 0z`;

function Triad({ x, y, down }: { x: number; y: number; down?: boolean }) {
    const dir = down ? 1 : -1;
    return (
        <g transform={`translate(${x} ${y})`} className="font-['Liberation_Sans',sans-serif] text-[11px]">
            <path d="M0 0h23" stroke="#9c1616" strokeWidth="4" />
            <path d="M0 0h23" stroke="#e86060" strokeWidth="2" />
            <path d="M21-4l9 4-9 4z" fill="#b81414" />
            <path d={`M0 0v${22 * dir}`} stroke="#1616a0" strokeWidth="4" />
            <path d={`M0 0v${22 * dir}`} stroke="#7070e8" strokeWidth="2" />
            <path d={`M-4 ${21 * dir}l4 ${9 * dir} 4 ${-9 * dir}z`} fill="#1616b0" />
            {down && <circle r="5" fill="#14501a" />}
            <text x="30" y="4" fill="#e00000">X</text>
            <text x="-5" y={down ? 38 : -33} fill="#0000d0">Z</text>
        </g>
    );
}

function ShadedScene() {
    const c = holes(407.5, 512, 1, -90);
    const body = outline(407.5, 512, 1, -90, 112, 97.8) + c.map(([x, y]) => circlePath(x, y, 72)).join('');
    return (
        <svg viewBox="0 0 820 926" className="size-full" role="img" aria-label="Top view">
            <defs>
                <filter id="soft" x="-20%" y="-20%" width="140%" height="140%">
                    <feGaussianBlur stdDeviation="14" />
                </filter>
            </defs>
            <rect x="96.500" y="176.500" width="622" height="571" fill="#c3d1ff" fillOpacity=".24" stroke="#6f95f5" />
            <path d={body} fillRule="evenodd" fill="#20202a" filter="url(#soft)" />
            <path d={body} fillRule="evenodd" fill="#003f7f" stroke="#000" />
            <g fill="none" stroke="#000">
                <path d={outline(407.5, 512, 1, -90, 88.7, 121.1)} />
                <path d={seams(407.5, 512, 1, -90)} />
                {c.map(([x, y]) => <circle key={`${x}-${y}`} cx={x} cy={y} r="75.500" />)}
            </g>
            <path d="M96 510.500h622" stroke="#0c2570" />
            <path d="M96 512h622" stroke="#4272e6" strokeWidth="2" />
            <text x="99" y="196" fill="#6f95f0" className="font-['Inter',sans-serif] text-[22px] font-semibold">Top Plane</text>
            <Triad x={39} y={868} down />
        </svg>
    );
}

function WireScene() {
    return (
        <svg viewBox="0 0 820 926" className="size-full" role="img" aria-label="Bottom view">
            <rect x="143.500" y="217.500" width="532" height="490" fill="#8f9fc0" fillOpacity=".14" stroke="#3c5596" />
            <g fill="none" stroke="#000" shapeRendering="crispEdges">
                <path d={outline(410, 420, 0.856, 90, 112, 97.8)} />
                <path d={seams(410, 420, 0.856, 90)} />
                <path d={seams(410, 420, 0.866, 90)} />
                {[0.853, 0.866].map((s) => (
                    <g key={s}>
                        <path d={outline(410, 420, s, 90, 88.7, 121.1)} />
                        {holes(410, 420, s, 90).map(([x, y]) => (
                            <g key={`${x}-${y}`}>
                                <circle cx={x} cy={y} r={75.5 * s} />
                                <circle cx={x} cy={y} r={72 * s} />
                            </g>
                        ))}
                    </g>
                ))}
            </g>
            <path d="M140 420h538" stroke="#27427f" strokeWidth="2" />
            <text x="145" y="701" fill="#2b4684" className="font-['Inter',sans-serif] text-[22px] font-semibold">Top Plane</text>
            <Triad x={38} y={868} />
        </svg>
    );
}

function Viewport({ label, children }: { label: string; children: ReactNode }) {
    return (
        <div className="relative min-w-0 flex-1 bg-[radial-gradient(ellipse_86%_56%_at_0%_0%,#fff_55%,rgba(255,255,255,0)_100%),radial-gradient(ellipse_30%_60%_at_100%_15%,rgba(245,245,248,0.7),rgba(245,245,248,0)),linear-gradient(to_bottom,#e0e3ee_0%,#d9dbe8_35%,#dcdfea_50%,#f2f3f8_60%,#ffffff_70%,#ffffff_85%,#f7f7fa_100%)]">
            {children}
            <div className="absolute bottom-0.5 left-3 flex items-center gap-0.5 text-[13px] leading-4 font-bold text-[#222]">
                <svg viewBox="0 0 16 8" className="h-2 w-4" fill="none" stroke="#999" aria-hidden="true">
                    <rect x=".5" y=".5" width="15" height="7" rx="3.500" />
                    <rect x="3" y="2" width="5" height="4" rx="2" />
                    <rect x="8" y="2" width="5" height="4" rx="2" />
                </svg>
                {label}
            </div>
        </div>
    );
}

const headsUp: { icon: string; arrow?: boolean; gap?: boolean }[] = [
    { icon: 'zoomFit', gap: true },
    { icon: 'zoomArea', gap: true },
    { icon: 'prevView', gap: true },
    { icon: 'section', gap: true },
    { icon: 'orient', arrow: true },
    { icon: 'display', arrow: true },
    { icon: 'eye', arrow: true },
    { icon: 'editAppearance', gap: true },
    { icon: 'scene', arrow: true },
    { icon: 'monitor', arrow: true },
];

const taskPane = ['home', 'library', 'folder', 'palette', 'ball', 'propertyMgr', 'forum'];

function Graphics() {
    return (
        <main className="flex min-w-0 flex-1">
            <Viewport label="*Top">
                <ShadedScene />
                <div className="absolute top-7 left-1.5 flex h-5 items-center text-xs text-black">
                    <svg viewBox="0 0 5 8" className="h-2 w-1" aria-hidden="true"><path d="M0 0l5 4-5 4z" fill="#111" /></svg>
                    <Icon name="partBlue" className="ml-3 size-[18px]" />
                    <span className="ml-1 whitespace-pre">Body  (Default&lt;&lt;Default&gt;...</span>
                </div>
                <button type="button" aria-label="Collapse panel" className="absolute top-[444px] left-0 flex h-[38px] w-2 items-center justify-center border border-l-0 border-[#999] bg-[#f7f7f7]">
                    <span className="size-1.5 shrink-0 rounded-full border border-[#999] bg-[#ccc]" />
                </button>
            </Viewport>
            <div className="w-1 shrink-0 border-x border-[#5a6190] bg-[#e8eaf2]" />
            <Viewport label="*Bottom">
                <WireScene />
                <div className="absolute top-1.5 right-[245px] flex items-center">
                    {headsUp.map((h) => (
                        <div key={h.icon} className={`flex items-center ${h.gap ? 'mr-1.5' : ''}`}>
                            <button type="button" aria-label={h.icon} className="flex w-5 justify-center"><Icon name={h.icon} className="size-[18px]" /></button>
                            {h.arrow && <span className="flex w-5 justify-center"><Caret /></span>}
                        </div>
                    ))}
                </div>
                <div className="absolute top-[7px] right-[7px] flex items-center text-[#999]">
                    <button type="button" aria-label="Pane left" className="w-[26px]">
                        <svg viewBox="0 0 14 16" className="mx-auto h-4 w-3.5" fill="none" stroke="currentColor"><path d="M1.500 1.500h11v13h-11z" /><path d="M6 4v7L2 7.500z" fill="currentColor" /></svg>
                    </button>
                    <button type="button" aria-label="Pane right" className="w-[26px]">
                        <svg viewBox="0 0 14 16" className="mx-auto h-4 w-3.5" fill="none" stroke="currentColor"><path d="M1.500 1.500h11v13h-11z" /><path d="M8 4v7l4-3.500z" fill="currentColor" /></svg>
                    </button>
                    <button type="button" aria-label="Minimize view" className="flex w-[26px] justify-center"><span className="mt-2 h-[3px] w-2.5 bg-[#999]" /></button>
                    <button type="button" aria-label="Restore view" className="flex w-[26px] justify-center"><Restore /></button>
                    <button type="button" aria-label="Close view" className="flex w-[26px] justify-center"><X className="size-4" strokeWidth={1.5} /></button>
                </div>
                <button type="button" aria-label="Accept" className="absolute top-8 right-[83px] size-[30px] opacity-25">
                    <svg viewBox="0 0 30 30"><path d="M1 15l5-5 6 6L25 4l5 4-18 18z" fill="#3fa02f" /></svg>
                </button>
                <button type="button" aria-label="Discard" className="absolute top-16 right-[42px] size-[26px] opacity-25">
                    <svg viewBox="0 0 26 26"><path d="M5 1l8 7 8-7 4 4-7 8 7 8-4 4-8-7-8 7-4-4 7-8-7-8z" fill="#e02020" stroke="#a01010" strokeLinejoin="round" /></svg>
                </button>
                <div className="absolute top-[58px] right-0 flex w-[26px] flex-col border-t border-l border-[#888]">
                    {taskPane.map((t) => (
                        <button key={t} type="button" aria-label={t} className={`flex h-6 items-center justify-center border-b border-[#888] ${t === 'ball' ? 'bg-[#f7f7f7]' : 'bg-[#d4d4d4]'}`}>
                            <Icon name={t} className="size-[18px]" />
                        </button>
                    ))}
                </div>
            </Viewport>
        </main>
    );
}

/* ---------- bottom ---------- */

const navPaths = ['M3 2v10M11 2v10L5 7z', 'M10 2v10L4 7z', 'M4 2v10l6-5z', 'M11 2v10M3 2v10l6-5z'];

function Footer() {
    return (
        <footer className="shrink-0">
            <div className="flex h-4 border-y border-[#888] pl-8">
                <div className="flex w-[66px] border-l border-[#888]">
                    {navPaths.map((d) => (
                        <button key={d} type="button" aria-label="Scroll tabs" className="flex flex-1 items-center justify-center border-r border-[#888] bg-[#aaa]">
                            <svg viewBox="0 0 14 14" className="size-3" fill="#888" stroke="#888"><path d={d} /></svg>
                        </button>
                    ))}
                </div>
                <button type="button" className="w-[57px] pl-1 text-xs leading-[11px] font-bold text-black">Model</button>
                <button type="button" className="w-[109px] border-x border-[#888] bg-[#d4d4d4] pl-2 text-left leading-[11px] text-[#222]">Motion Study 1</button>
            </div>
            <div className="flex h-[18px] items-center pl-px text-black">
                <span className="flex-1">Select entities to modify their appearance</span>
                <span className="h-4 w-2 border-x border-[#ccc]" />
                <span className="w-[71px] text-center">Editing Part</span>
                <span className="h-4 w-5 border-x border-[#ccc]" />
                <button type="button" className="flex w-[115px] items-center justify-center gap-4 text-[#aaa]">
                    MMGS
                    <Caret className="rotate-180" />
                </button>
                <Icon name="tag" className="mr-1 ml-10 size-4" />
            </div>
            <div className="h-0.5 bg-[#6b4423]" />
        </footer>
    );
}

export default function App() {
    return (
        <div className="flex h-screen flex-col overflow-hidden bg-[#f7f7f7] font-['Open_Sans','Noto_Sans',sans-serif] text-[11px] leading-4 text-[#222]">
            <TitleBar />
            <Ribbon />
            <div className="flex min-h-0 flex-1">
                <LeftPanel />
                <Graphics />
            </div>
            <Footer />
        </div>
    );
}
